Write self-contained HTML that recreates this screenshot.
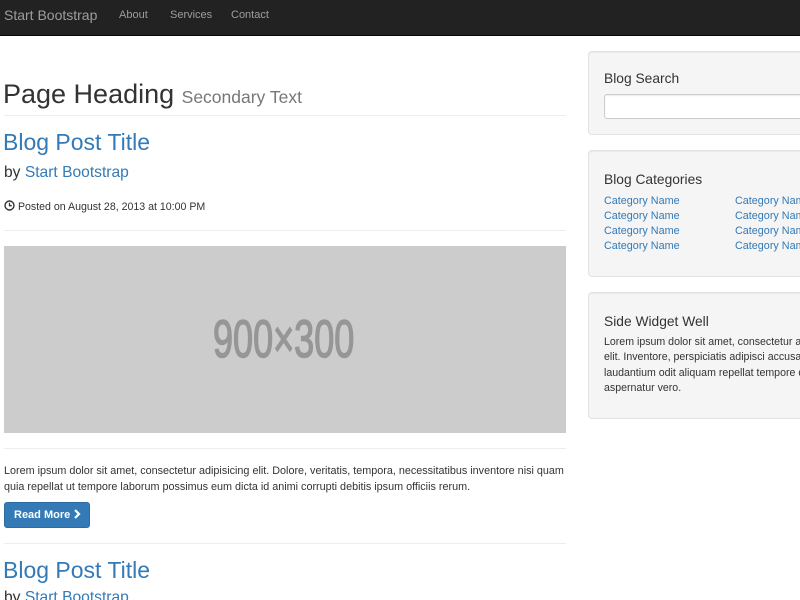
<!DOCTYPE html>
<html><head><meta charset="utf-8"><style>
*{margin:0;padding:0;box-sizing:border-box}
html,body{width:800px;height:600px;overflow:hidden}
body{background:#fff;font-family:"Liberation Sans",Arial,sans-serif;color:#333;position:relative}
#w{position:absolute;left:0;top:0;width:800px;height:600px;overflow:hidden}
.a{position:absolute;white-space:nowrap}
.nav{position:absolute;left:0;top:0;width:800px;height:36px;background:#222;border-bottom:1px solid #080808}
.hr{position:absolute;left:4px;width:562px;height:1px;background:#eee}
.blue{color:#337ab7}
.well{position:absolute;left:588px;width:230px;background:#f5f5f5;border:1px solid #e3e3e3;border-radius:4px;box-shadow:inset 0 1px 1px rgba(0,0,0,.05)}
.cat{font-size:10.8px;line-height:15px;color:#337ab7}
</style></head><body><div id="w">
<div class="nav"></div>
<div class="a" style="left:4px;top:6px;font-size:14px;line-height:18px;color:#9d9d9d">Start Bootstrap</div>
<div class="a" style="left:119px;top:8px;font-size:11px;line-height:14px;color:#9d9d9d">About</div>
<div class="a" style="left:170px;top:8px;font-size:11px;line-height:14px;color:#9d9d9d">Services</div>
<div class="a" style="left:231px;top:8px;font-size:11px;line-height:14px;color:#9d9d9d">Contact</div>

<div class="a" style="left:3px;top:77px;font-size:27px;line-height:34px;color:#333">Page Heading <span style="font-size:17.5px;color:#777">Secondary Text</span></div>
<div class="hr" style="top:115px"></div>
<div class="a blue" style="left:3px;top:127px;font-size:23px;line-height:30px">Blog Post Title</div>
<div class="a" style="left:4px;top:163px;font-size:15.6px;line-height:20px">by <span class="blue">Start Bootstrap</span></div>
<div class="a" style="left:4px;top:200px;font-size:10.6px;line-height:14px"><svg width="11" height="11" viewBox="0 0 11 11" style="vertical-align:-1px"><circle cx="5.5" cy="5.5" r="4.5" fill="none" stroke="#333" stroke-width="1.4"/><path d="M5.5 2.8V5.7H7.8" fill="none" stroke="#333" stroke-width="1.3"/></svg> Posted on August 28, 2013 at 10:00 PM</div>
<div class="hr" style="top:230px"></div>
<div class="a" style="left:4px;top:246px;width:562px;height:187px;background:#ccc"></div>
<div class="a" style="left:213px;top:310px;font-size:53px;line-height:60px;color:#969696;-webkit-text-stroke:1.5px #969696;transform:scaleX(0.68);transform-origin:0 0">900×300</div>
<div class="hr" style="top:448px"></div>
<div class="a" style="left:4px;top:463px;font-size:10.8px;line-height:16px">Lorem ipsum dolor sit amet, consectetur adipisicing elit. Dolore, veritatis, tempora, necessitatibus inventore nisi quam<br>quia repellat ut tempore laborum possimus eum dicta id animi corrupti debitis ipsum officiis rerum.</div>
<div class="a" style="left:4px;top:502px;width:86px;height:26px;background:#337ab7;border:1px solid #2e6da4;border-radius:3px;color:#fff;font-size:11px;font-weight:bold;line-height:24px;padding-left:9px">Read More <svg width="8" height="10" viewBox="0 0 8 10" style="vertical-align:-1px"><path d="M2 1L6 5L2 9" fill="none" stroke="#fff" stroke-width="2.2"/></svg></div>
<div class="hr" style="top:543px"></div>
<div class="a blue" style="left:3px;top:555px;font-size:23px;line-height:30px">Blog Post Title</div>
<div class="a" style="left:4px;top:588px;font-size:15.6px;line-height:20px">by <span class="blue">Start Bootstrap</span></div>

<div class="well" style="top:51px;height:84px"></div>
<div class="a" style="left:604px;top:70px;font-size:13.8px;line-height:18px">Blog Search</div>
<div class="a" style="left:604px;top:94px;width:210px;height:25px;background:#fff;border:1px solid #ccc;border-radius:3px;box-shadow:inset 0 1px 1px rgba(0,0,0,.075)"></div>

<div class="well" style="top:150px;height:127px"></div>
<div class="a" style="left:604px;top:171px;font-size:13.8px;line-height:18px">Blog Categories</div>
<div class="a cat" style="left:604px;top:194px">Category Name<br>Category Name<br>Category Name<br>Category Name</div>
<div class="a cat" style="left:735px;top:194px">Category Name<br>Category Name<br>Category Name<br>Category Name</div>

<div class="well" style="top:292px;height:127px"></div>
<div class="a" style="left:604px;top:313px;font-size:13.8px;line-height:18px">Side Widget Well</div>
<div class="a" style="left:604px;top:335px;font-size:10.6px;line-height:15.3px">Lorem ipsum dolor sit amet, consectetur adipisicing<br>elit. Inventore, perspiciatis adipisci accusamus<br>laudantium odit aliquam repellat tempore quos<br>aspernatur vero.</div>
</div></body></html>
